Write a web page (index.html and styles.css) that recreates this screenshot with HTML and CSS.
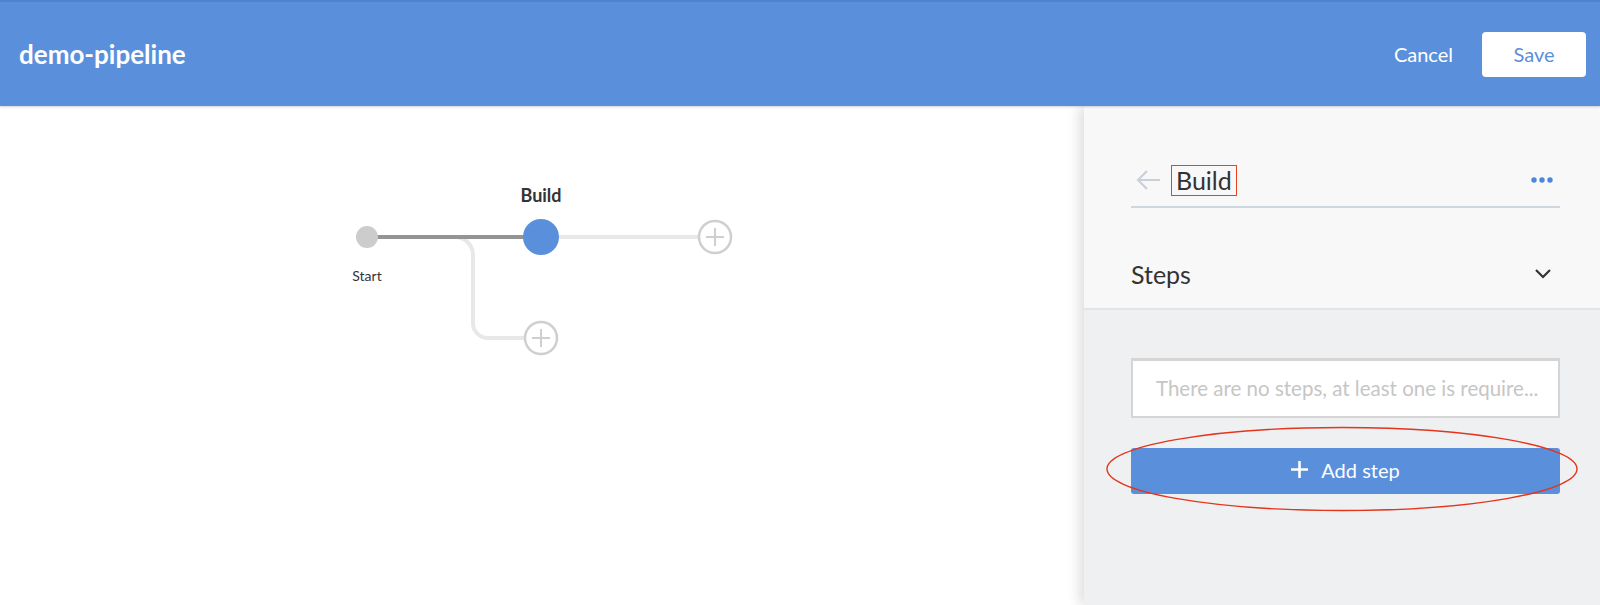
FILE: index.html
```html
<!DOCTYPE html>
<html lang="en">
<head>
<meta charset="utf-8">
<title>demo-pipeline</title>
<link rel="stylesheet" href="styles.css">
</head>
<body>
<header class="topbar">
  <h1 class="pipeline-name">demo-pipeline</h1>
  <div class="actions">
    <button class="btn-cancel">Cancel</button>
    <button class="btn-save">Save</button>
  </div>
</header>
<main class="workspace">
  <section class="canvas">
    <svg class="graph" width="1084" height="499" viewBox="0 0 1084 499">
      <path d="M 455 131 A 18 18 0 0 1 473 149 L 473 217 A 15 15 0 0 0 488 232 L 525 232" fill="none" stroke="#e8e8e8" stroke-width="4"/>
      <line x1="541" y1="131" x2="699" y2="131" stroke="#e8e8e8" stroke-width="4"/>
      <line x1="367" y1="131" x2="541" y2="131" stroke="#949494" stroke-width="4"/>
      <circle cx="367" cy="131" r="11" fill="#cccccc"/>
      <circle cx="541" cy="131" r="18" fill="#5a8fdc"/>
      <circle cx="715" cy="131" r="16" fill="#fff" stroke="#cfcfcf" stroke-width="2.5"/>
      <path d="M 706 131 H 724 M 715 122 V 140" stroke="#cfcfcf" stroke-width="2"/>
      <circle cx="541" cy="232" r="16" fill="#fff" stroke="#cfcfcf" stroke-width="2.5"/>
      <path d="M 532 232 H 550 M 541 223 V 241" stroke="#cfcfcf" stroke-width="2"/>
      <text x="541" y="96" class="label-stage" text-anchor="middle">Build</text>
      <text x="367" y="175" class="label-start" text-anchor="middle">Start</text>
    </svg>
  </section>
  <aside class="panel">
    <div class="panel-head">
      <div class="title-row">
        <svg class="back" width="30" height="24" viewBox="0 0 30 24">
          <path d="M 29 12 H 7 M 16 3 L 7 12 L 16 21" fill="none" stroke="#c8d0da" stroke-width="2.2"/>
        </svg>
        <span class="stage-title">Build</span>
        <svg class="more" width="26" height="10" viewBox="0 0 26 10">
          <circle cx="3" cy="5" r="2.7" fill="#4a87dd"/>
          <circle cx="11" cy="5" r="2.7" fill="#4a87dd"/>
          <circle cx="19" cy="5" r="2.7" fill="#4a87dd"/>
        </svg>
      </div>
      <div class="steps-row">
        <span class="steps-label">Steps</span>
        <svg class="chevron" width="18" height="12" viewBox="0 0 18 12">
          <path d="M 2 2 L 9 9 L 16 2" fill="none" stroke="#333" stroke-width="2.2"/>
        </svg>
      </div>
    </div>
    <div class="panel-body">
      <div class="empty-steps">There are no steps, at least one is require...</div>
      <button class="btn-add"><svg width="17" height="17" viewBox="0 0 17 17"><path d="M 0 8.5 H 17 M 8.5 0 V 17" stroke="#fff" stroke-width="2.6"/></svg><span>Add step</span></button>
      <svg class="annotation" width="472" height="86" viewBox="0 0 472 86">
        <ellipse cx="236" cy="43" rx="235" ry="41.5" fill="none" stroke="#e5341b" stroke-width="1.4"/>
      </svg>
    </div>
  </aside>
</main>
</body>
</html>
```

FILE: styles.css
```css
* { box-sizing: border-box; }
html, body { margin: 0; padding: 0; height: 100%; }
body {
  font-family: Lato, "Open Sans", "Liberation Sans", sans-serif;
  background: #fff;
  color: #333;
  overflow: hidden;
}
.topbar {
  height: 106px;
  background: #5a90db;
  border-top: 2px solid #4d83cf;
  display: flex;
  align-items: center;
  justify-content: space-between;
  padding: 0 14px 0 19px;
  position: relative;
  z-index: 2;
  box-shadow: 0 1px 2px rgba(0,0,0,0.18);
}
.pipeline-name {
  margin: 0;
  color: #fff;
  font-size: 26px;
  font-weight: 700;
}
.actions { display: flex; align-items: center; gap: 29px; }
.btn-cancel {
  background: none;
  border: 0;
  color: #fff;
  font-family: inherit;
  font-size: 20px;
  padding: 0;
}
.btn-save {
  width: 104px;
  height: 45px;
  background: #fff;
  border: 0;
  border-radius: 4px;
  color: #5a90db;
  font-family: inherit;
  font-size: 20px;
}
.workspace {
  display: flex;
  height: 499px;
}
.canvas { flex: 1; position: relative; overflow: hidden; }
.graph { display: block; }
.label-stage { font-family: Lato, sans-serif; font-size: 18px; font-weight: 700; fill: #333; }
.label-start { font-family: Lato, sans-serif; font-size: 14px; fill: #333; }
.panel {
  width: 516px;
  display: flex;
  flex-direction: column;
  background: #eff0f2;
  box-shadow: -5px 0 12px rgba(0,0,0,0.13);
  position: relative;
  z-index: 1;
}
.panel-head {
  background: #f8f8f8;
  border-bottom: 2px solid #e3e4e6;
  padding: 54px 40px 14px 47px;
}
.title-row {
  display: flex;
  align-items: center;
  height: 40px;
  border-bottom: 2px solid #cfd6df;
  box-sizing: content-box;
  padding-bottom: 6px;
}
.back { display: block; margin-right: 10px; }
.stage-title {
  font-size: 25px;
  line-height: 29px;
  border: 1.5px solid #e8431f;
  padding: 0 4px;
  color: #333;
}
.more { display: block; margin-left: auto; margin-right: 3px; }
.steps-row {
  display: flex;
  align-items: center;
  justify-content: space-between;
  height: 40px;
  margin-top: 46px;
}
.steps-label { font-size: 25px; color: #333; }
.chevron { display: block; margin-right: 8px; }
.panel-body {
  position: relative;
  flex: 1;
  padding: 48px 40px 0 47px;
}
.empty-steps {
  height: 60px;
  background: #fff;
  border: 2px solid #d5d5d5;
  border-top-width: 3px;
  padding: 0 12px 0 23px;
  line-height: 55px;
  font-size: 20.5px;
  color: #c6c6c6;
  white-space: nowrap;
  overflow: hidden;
}
.btn-add {
  margin-top: 30px;
  width: 100%;
  height: 46px;
  padding: 0 0 3px;
  background: #5a8fdc;
  border: 0;
  border-radius: 3px;
  color: #fff;
  font-family: inherit;
  font-size: 20px;
  display: flex;
  align-items: center;
  justify-content: center;
  gap: 13px;
}
.btn-add svg { display: block; }
.annotation {
  position: absolute;
  left: 22px;
  top: 116px;
}
```
